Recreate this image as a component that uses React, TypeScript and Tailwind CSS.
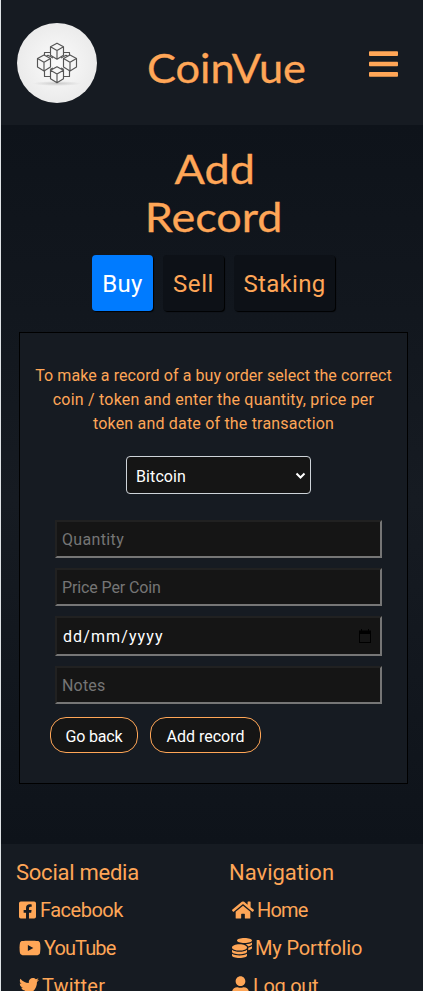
import type { ReactNode } from "react";
import {
  FaBars,
  FaCoins,
  FaFacebookSquare,
  FaHome,
  FaTwitter,
  FaUser,
  FaYoutube,
} from "react-icons/fa";

const inputBox =
  "block w-[327px] border-2 border-t-[#212121] border-l-[#212121] border-r-[#767676] border-b-[#767676] bg-[#151515] px-[5px] text-[16px] text-white outline-none placeholder:text-[#757575]";

function Cube({ x, y }: { x: number; y: number }) {
  return (
    <g transform={`translate(${x} ${y})`}>
      <path d="M0-8 6.500-4.500V4L0 8-6.500 4V-4.500ZM-6.500-4.500 0-.800 6.500-4.500M0-.800V8" fill="#f6f6f6" />
    </g>
  );
}

function Logo() {
  return (
    <svg className="block size-20" viewBox="0 0 80 80" aria-label="CoinVue logo">
      <defs>
        <radialGradient id="disc">
          <stop offset="0" stopColor="#fbfbfb" />
          <stop offset="1" stopColor="#ebebeb" />
        </radialGradient>
        <radialGradient id="shade">
          <stop offset="0" stopColor="#c9c9c9" />
          <stop offset="1" stopColor="#c9c9c9" stopOpacity="0" />
        </radialGradient>
      </defs>
      <circle cx="40" cy="40" r="40" fill="url(#disc)" />
      <ellipse cx="40" cy="60.500" rx="24" ry="2.500" fill="url(#shade)" />
      <g fill="none" stroke="#555" strokeWidth="1.150" strokeLinejoin="round">
        <path d="M35 29.500H27.500V35M45 29.500H52.500V35M27.500 47V53.500H35M52.500 47V53.500H45M29 33.500 31 32.300 36 35M51 33.500 49 32.300 44 35M33 46.500 36 45M47 46.500 44 45" />
        <Cube x={40} y={28.2} />
        <Cube x={27} y={40} />
        <Cube x={53} y={40} />
        <Cube x={40} y={51.700} />
      </g>
    </svg>
  );
}

function FooterLink({ icon, spacing, children }: { icon: ReactNode; spacing: string; children: ReactNode }) {
  return (
    <a className={`flex h-[38px] items-center pl-[3px] text-[20px] leading-[38px] whitespace-nowrap ${spacing}`}>
      {icon}
      {children}
    </a>
  );
}

export default function App() {
  return (
    <div className="h-[991px] w-[423px] overflow-hidden border-l border-[#dfe3e6] bg-[linear-gradient(#0e131a_125px,#161b22_500px,#0e131a_844px)] font-['Roboto',sans-serif] text-[#ffa657]">
      <header className="flex h-[125px] items-start bg-[#161b22] pt-[23px] pl-4">
        <Logo />
        <h1 className="mt-[17px] ml-[50px] w-[160px] origin-left scale-x-[1.083] font-['Lato',sans-serif] text-[40px] leading-[56px] font-normal whitespace-nowrap [-webkit-text-stroke:0.3px_#ffa657]">
          CoinVue
        </h1>
        <FaBars className="mt-[24px] ml-[62px] h-[34px] w-[29px]" />
      </header>

      <main className="h-[719px] pt-5">
        <h2 className="ml-[2px] scale-x-[1.125] text-center font-['Lato',sans-serif] text-[40px] leading-[48px] font-normal [-webkit-text-stroke:0.3px_#ffa657]">
          <span className="block pl-[3px]">Add</span>
          <span className="block pl-px">Record</span>
        </h2>
        <div className="mt-[14px] ml-[91px] flex h-14 gap-[10px] text-[24px] leading-[58px]">
          <button className="w-[61px] rounded-[4px] bg-[#007bff] tracking-[0.4px] text-white shadow-[1px_1px_1px_#000]">Buy</button>
          <button className="w-[61px] rounded-[4px] bg-[#0d1117] tracking-[0.6px] shadow-[1px_1px_1px_#000]">Sell</button>
          <button className="w-[101px] rounded-[4px] bg-[#0d1117] tracking-[0.3px] shadow-[1px_1px_1px_#000]">Staking</button>
        </div>

        <section className="mt-[21px] ml-[18px] h-[452px] w-[389px] border border-black bg-[#161b22] pt-[31px]">
          <p className="text-center text-[16px] leading-6 whitespace-nowrap">
            <span className="tracking-[0.08px]">To make a record of a buy order select the correct</span>
            <br />
            <span className="tracking-[0.22px]">coin / token and enter the quantity, price per</span>
            <br />
            <span className="tracking-[0.19px]">token and date of the transaction</span>
          </p>
          <div className="mt-5 ml-[106px] flex h-[38px] w-[185px] items-center justify-between rounded-[4px] border border-[#ced4da] bg-[#151515] pr-[4px] pl-[9px] text-[16px] text-white">
            <span className="pt-[3px] tracking-[0.1px]">Bitcoin</span>
            <svg className="size-[11px]" viewBox="0 0 11 11">
              <path d="m1.500 3.500 4 4 4-4" fill="none" stroke="white" strokeWidth="2" />
            </svg>
          </div>
          <form className="mt-[26px] ml-[35px] flex flex-col gap-[10px]">
            <input className={`${inputBox} h-[38px] tracking-[0.35px]`} placeholder="Quantity" />
            <input className={`${inputBox} h-[38px] tracking-[-0.12px]`} placeholder="Price Per Coin" />
            <div className={`${inputBox} flex! h-[40px] items-center justify-between pr-[9px]! pl-[6px]!`}>
              <span className="pt-px tracking-[1.1px]">dd/mm/yyyy</span>
              <svg className="h-[14px] w-[12px]" viewBox="0 0 12 14">
                <path d="M0 1.500h2V0h1v1.500h6V0h1v1.500h2V14H0ZM1 5v8h10V5Z" fill="black" fillRule="evenodd" />
              </svg>
            </div>
            <input className={`${inputBox} h-[38px] tracking-[0.2px]`} placeholder="Notes" />
          </form>
          <div className="mt-[13px] ml-[30px] flex h-9 gap-3 text-[16px] text-white">
            <button className="w-[88px] rounded-[16px] border border-[#ffa657] bg-[#151515] pt-[3px] tracking-[-0.2px]">Go back</button>
            <button className="w-[111px] rounded-[16px] border border-[#ffa657] bg-[#151515] pt-[3px]">Add record</button>
          </div>
        </section>
      </main>

      <footer className="grid h-[147px] grid-cols-[213px_209px] overflow-hidden bg-[#161b22] pt-[14px] pl-[15px]">
        <div>
          <h3 className="h-[33px] text-[22px] leading-[30px] tracking-[-0.25px]">Social media</h3>
          <FooterLink spacing="gap-1 tracking-[-0.5px]" icon={<FaFacebookSquare className="h-5 w-[17px]" />}>Facebook</FooterLink>
          <FooterLink spacing="gap-[3px] tracking-[-0.9px]" icon={<FaYoutube className="h-5 w-[22px]" />}>YouTube</FooterLink>
          <FooterLink spacing="gap-[3px] tracking-[0.2px]" icon={<FaTwitter className="size-5" />}>Twitter</FooterLink>
        </div>
        <div>
          <h3 className="h-[33px] text-[22px] leading-[30px]">Navigation</h3>
          <FooterLink spacing="gap-[3px] tracking-[-0.8px]" icon={<FaHome className="h-5 w-[22px]" />}>Home</FooterLink>
          <FooterLink spacing="gap-[3px] tracking-[-0.15px]" icon={<FaCoins className="size-5" />}>My Portfolio</FooterLink>
          <FooterLink spacing="gap-1 tracking-[-0.3px]" icon={<FaUser className="h-5 w-[17px]" />}>Log out</FooterLink>
        </div>
      </footer>
    </div>
  );
}
